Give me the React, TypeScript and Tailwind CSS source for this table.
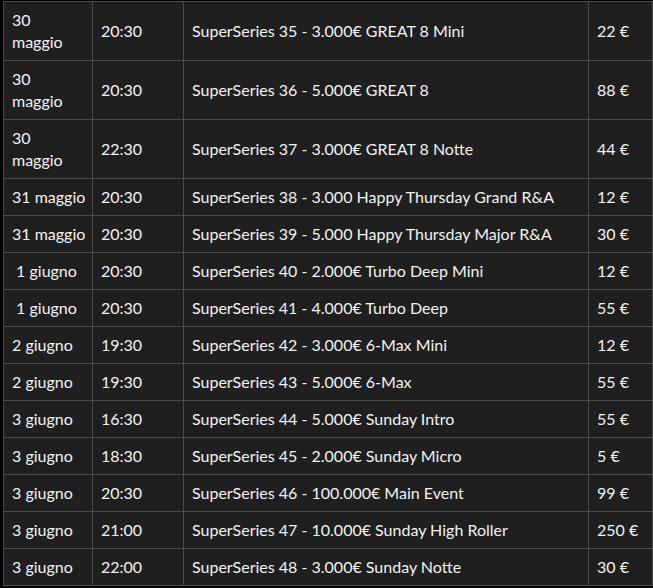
import React from "react";

const rows: [string, string, string, string][] = [
  ["30\nmaggio", "20:30", "SuperSeries 35 - 3.000€ GREAT 8 Mini", "22 €"],
  ["30\nmaggio", "20:30", "SuperSeries 36 - 5.000€ GREAT 8", "88 €"],
  ["30\nmaggio", "22:30", "SuperSeries 37 - 3.000€ GREAT 8 Notte", "44 €"],
  ["31 maggio", "20:30", "SuperSeries 38 - 3.000 Happy Thursday Grand R&A", "12 €"],
  ["31 maggio", "20:30", "SuperSeries 39 - 5.000 Happy Thursday Major R&A", "30 €"],
  ["\u00a01 giugno", "20:30", "SuperSeries 40 - 2.000€ Turbo Deep Mini", "12 €"],
  ["\u00a01 giugno", "20:30", "SuperSeries 41 - 4.000€ Turbo Deep", "55 €"],
  ["2 giugno", "19:30", "SuperSeries 42 - 3.000€ 6-Max Mini", "12 €"],
  ["2 giugno", "19:30", "SuperSeries 43 - 5.000€ 6-Max", "55 €"],
  ["3 giugno", "16:30", "SuperSeries 44 - 5.000€ Sunday Intro", "55 €"],
  ["3 giugno", "18:30", "SuperSeries 45 - 2.000€ Sunday Micro", "5 €"],
  ["3 giugno", "20:30", "SuperSeries 46 - 100.000€ Main Event", "99 €"],
  ["3 giugno", "21:00", "SuperSeries 47 - 10.000€ Sunday High Roller", "250 €"],
  ["3 giugno", "22:00", "SuperSeries 48 - 3.000€ Sunday Notte", "30 €"],
];

const App = () => {
  return (
    <div className="min-h-[588px] bg-black pt-[1px] pl-[3px]" style={{ fontFamily: "Lato, 'Open Sans', sans-serif" }}>
      <table className="table-fixed border-collapse w-[649px] text-[16px] leading-[22px] text-[#f2f2f2] bg-[#1f1f1f]">
        <colgroup>
          <col className="w-[89px]" />
          <col className="w-[91px]" />
          <col className="w-[405px]" />
          <col className="w-[64px]" />
        </colgroup>
        <tbody>
          {rows.map((r, i) => (
            <tr key={i}>
              {r.map((c, j) => (
                <td key={j} className="border border-[#4a4a4a] px-[8px] py-[7px] align-middle whitespace-pre">
                  {c}
                </td>
              ))}
            </tr>
          ))}
        </tbody>
      </table>
    </div>
  );
};

export default App;
